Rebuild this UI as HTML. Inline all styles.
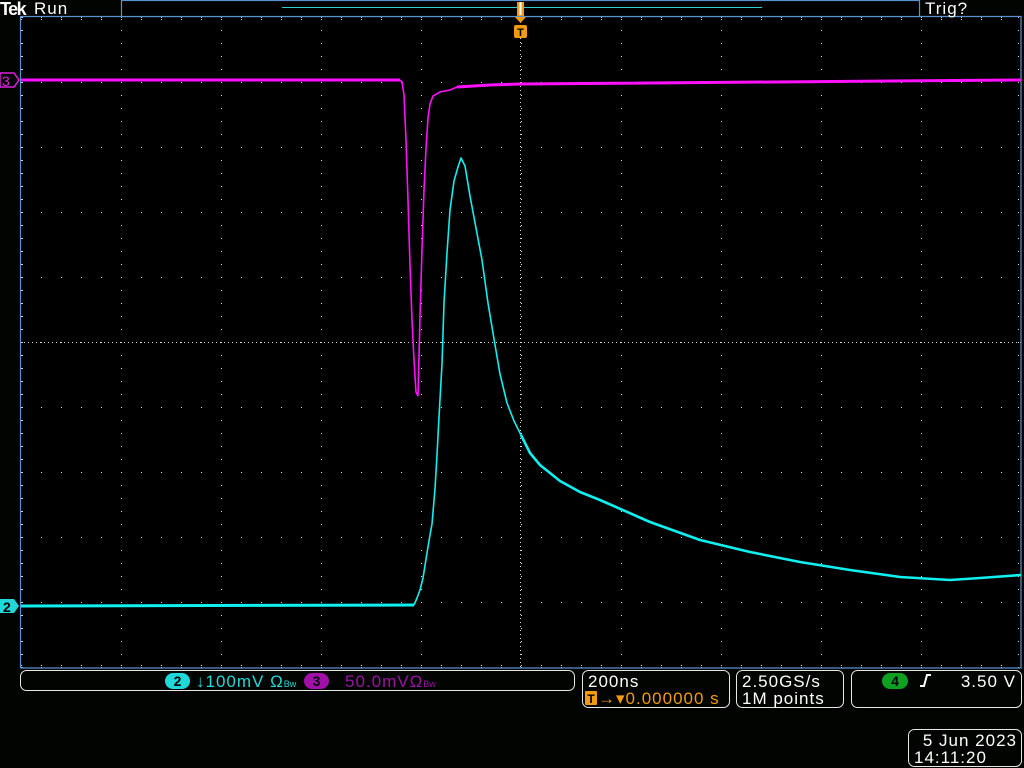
<!DOCTYPE html>
<html><head><meta charset="utf-8"><style>
html,body{margin:0;padding:0;background:#000;}
svg{display:block}
text{font-family:"Liberation Sans",sans-serif;}
.t{font-size:17px;letter-spacing:1px}
</style></head><body>
<svg width="1024" height="768" viewBox="0 0 1024 768" xmlns="http://www.w3.org/2000/svg">
<defs>
<pattern id="vd" x="0" y="17" width="100" height="13" patternUnits="userSpaceOnUse"><rect x="21" y="0" width="1" height="1" fill="#ddd"/></pattern>
<pattern id="hd" x="1" y="0" width="20" height="65" patternUnits="userSpaceOnUse"><rect x="0" y="17" width="1" height="1" fill="#ddd"/></pattern>
</defs>
<rect width="1024" height="768" fill="#010401"/>
<rect x="20" y="16" width="1001" height="652" fill="#000"/>
<rect x="20" y="16" width="1001" height="652" fill="url(#vd)"/>
<rect x="20" y="16" width="1001" height="652" fill="url(#hd)"/>
<line x1="520.5" y1="18" x2="520.5" y2="668" stroke="#ddd" stroke-width="1" stroke-dasharray="1,3"/>
<line x1="20" y1="342.5" x2="1021" y2="342.5" stroke="#ddd" stroke-width="1" stroke-dasharray="1,3"/>
<line x1="21" y1="19.5" x2="1021" y2="19.5" stroke="#ddd" stroke-dasharray="1,19" />
<line x1="21" y1="665.5" x2="1021" y2="665.5" stroke="#ddd" stroke-dasharray="1,19" />
<line x1="22.5" y1="17" x2="22.5" y2="668" stroke="#ddd" stroke-dasharray="1,12" />
<line x1="1018.5" y1="17" x2="1018.5" y2="668" stroke="#ddd" stroke-dasharray="1,12" />
<path d="M20.5 668V16.5H1021V668H20.5" fill="none" stroke="#5a8fd0" stroke-width="1.2"/>
<rect x="121.5" y="0.5" width="798" height="16" fill="#000" stroke="#5a8fd0" stroke-width="1.2"/>
<line x1="282" y1="7.5" x2="762" y2="7.5" stroke="#30d0d0" stroke-width="1"/>
<text x="0" y="15" font-size="18" font-weight="bold" fill="#fff" letter-spacing="-1.5">Tek</text>
<text x="34" y="14" class="t" fill="#fff">Run</text>
<text x="925" y="14" class="t" fill="#fff">Trig?</text>
<rect x="517" y="2" width="7" height="14" fill="#f39a10"/>
<rect x="519.5" y="2" width="2" height="13" fill="#fff"/>
<path d="M515 17h11l-5.5 6z" fill="#f39a10"/>
<rect x="514" y="25" width="13" height="13" rx="2" fill="#f39a10"/>
<text x="520.5" y="36" font-size="11" font-weight="bold" fill="#000" text-anchor="middle">T</text>
<path d="M0 73h14l5 7l-5 7H0z" fill="#000" stroke="#e020e0" stroke-width="1.5"/>
<text x="2" y="86" font-size="14" fill="#e020e0">3</text>
<path d="M0 599h14l5 7l-5 7H0z" fill="#20d8d8"/>
<text x="3" y="612" font-size="14" font-weight="bold" fill="#000">2</text>
<polyline fill="none" stroke="#ff10ff" stroke-width="3" stroke-linejoin="round" points="21,80 400,80"/>
<polyline fill="none" stroke="#ff10ff" stroke-width="1.6" points="400,80 402,82 404,95 406,140 408,200 410,265 412,320 414,360 416,392 418,396 420,317 422,250 424,190 426,149 428,118 430,104 433,96 440,92 450,90 457,87"/>
<polyline fill="none" stroke="#ff10ff" stroke-width="3" points="457,87 490,85 520,84 1021,80"/>
<polyline fill="none" stroke="#10f0f0" stroke-width="3" points="21,606 414,605"/>
<polyline fill="none" stroke="#10f0f0" stroke-width="1.6" stroke-linejoin="round" points="414,605 417,598 420,590 423,578 427,553 430,535 432,524 435,489 437,455 439,417 442,364 444,303 447,253 450,210 454,181 458,167 461,158 465,166 470,196 476,228 482,260 488,303 494,339 500,374 507,403 514,421 521,435"/>
<polyline fill="none" stroke="#10f0f0" stroke-width="2.6" stroke-linejoin="round" points="521,435 530,453 540,465 560,481 580,492 600,500 650,522 700,540 750,552 800,562 850,570 900,577 950,580 980,578 1021,575"/>
<rect x="20.5" y="670.5" width="554" height="20" rx="6" fill="none" stroke="#e8e8e8"/>
<rect x="165" y="673" width="25" height="16" rx="8" fill="#20d8d8"/>
<text x="177.5" y="686" font-size="14" font-weight="bold" fill="#000" text-anchor="middle">2</text>
<text x="196" y="687" class="t" fill="#20d8d8">↓100mV Ω<tspan font-size="9" letter-spacing="0">Bw</tspan></text>
<rect x="304" y="673" width="25" height="16" rx="8" fill="#a010a8"/>
<text x="316.5" y="686" font-size="14" font-weight="bold" fill="#000" text-anchor="middle">3</text>
<text x="345" y="687" class="t" fill="#a010a8">50.0mVΩ<tspan font-size="9" letter-spacing="0">Bw</tspan></text>
<rect x="582.5" y="670.5" width="147" height="37" rx="6" fill="none" stroke="#e8e8e8"/>
<text x="588" y="687" class="t" fill="#fff">200ns</text>
<rect x="585" y="691" width="12" height="14" rx="1" fill="#f39a10"/>
<text x="591" y="703" font-size="12" font-weight="bold" fill="#000" text-anchor="middle">T</text>
<text x="598" y="704" class="t" fill="#f39a10" letter-spacing="0.5">→▾0.000000 s</text>
<rect x="736.5" y="670.5" width="107" height="37" rx="6" fill="none" stroke="#e8e8e8"/>
<text x="742" y="687" class="t" fill="#fff">2.50GS/s</text>
<text x="742" y="704" class="t" fill="#fff">1M points</text>
<rect x="851.5" y="670.5" width="170" height="37" rx="6" fill="none" stroke="#e8e8e8"/>
<rect x="882" y="673" width="26" height="16" rx="8" fill="#10a020"/>
<text x="895" y="686" font-size="14" font-weight="bold" fill="#000" text-anchor="middle">4</text>
<path d="M920 686h4l3-11h4" fill="none" stroke="#fff" stroke-width="2"/>
<text x="1016" y="687" class="t" fill="#fff" text-anchor="end">3.50 V</text>
<rect x="908.5" y="729.5" width="113" height="37" rx="6" fill="none" stroke="#e8e8e8"/>
<text x="1017" y="746" class="t" fill="#fff" text-anchor="end">5 Jun 2023</text>
<text x="914" y="763" class="t" fill="#fff">14:11:20</text>
</svg>
</body></html>
